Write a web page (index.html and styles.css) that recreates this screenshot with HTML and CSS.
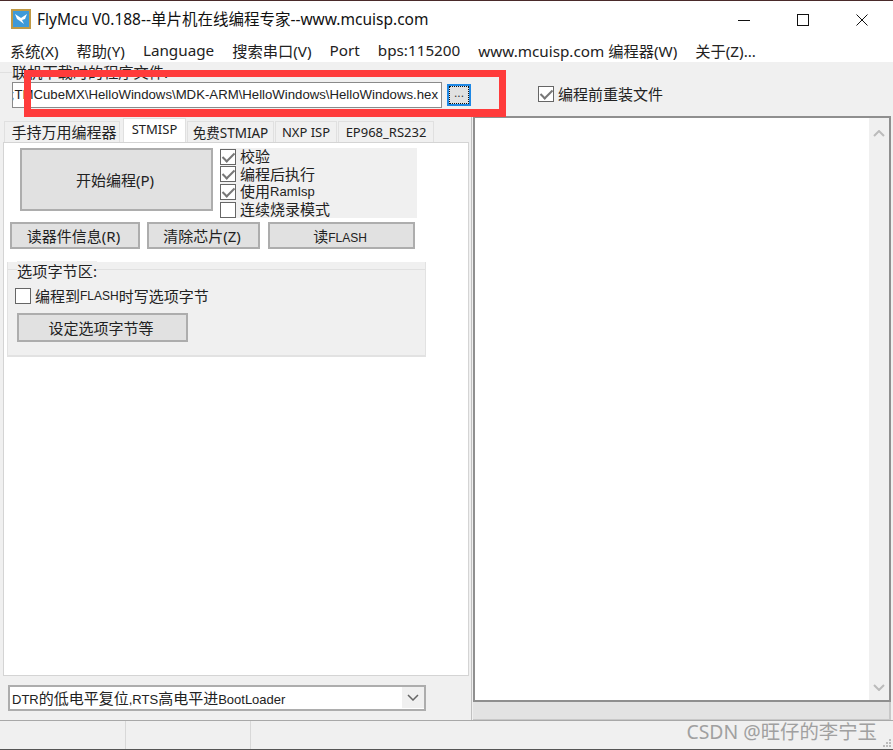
FILE: index.html
```html
<!doctype html>
<html>
    <head>
        <meta charset="utf-8">
        <title>FlyMcu</title>
        <link rel="stylesheet" href="styles.css">
    </head>
    <body>
    <div class="window">
        <div class="titlebar">
            <svg class="app-icon" width="20" height="20" viewBox="0 0 20 20">
                <rect x="1" y="1" width="18" height="18" fill="#3f9ad8" stroke="#c09a45" stroke-width="2"/>
                <path d="M4 5 L10 9 L16 5 L14 10 L11 11 L13 15 L9 12 L6 10 Z" fill="#fff"/>
            </svg>
            <span class="title-text">FlyMcu V0.188--单片机在线编程专家--www.mcuisp.com</span>
            <div class="win-buttons">
                <svg width="12" height="12" viewBox="0 0 12 12"><path d="M0 6.5H12" stroke="#111" fill="none"/></svg>
                <svg width="12" height="12" viewBox="0 0 12 12"><rect x="0.5" y="0.5" width="11" height="11" stroke="#111" fill="none"/></svg>
                <svg width="12" height="12" viewBox="0 0 12 12"><path d="M0.5 0.5L11.5 11.5M11.5 0.5L0.5 11.5" stroke="#111" fill="none"/></svg>
            </div>
        </div>
        <div class="menubar">
            <span>系统(X)</span>
            <span>帮助(Y)</span>
            <span>Language</span>
            <span>搜索串口(V)</span>
            <span>Port</span>
            <span>bps:115200</span>
            <span>www.mcuisp.com 编程器(W)</span>
            <span>关于(Z)...</span>
        </div>
        <div class="filebar">
            <div class="file-label"><span>联机下载时的程序文件:</span></div>
            <div class="file-row">
                <div class="file-input"><span>;TMCubeMX\HelloWindows\MDK-ARM\HelloWindows\HelloWindows.hex</span></div>
                <button class="browse-button"><span>...</span></button>
                <label class="check check-reload"><i class="box on"></i>编程前重装文件</label>
            </div>
        </div>
        <div class="red-mark"></div>
        <div class="main">
            <div class="left">
                <div class="tabs">
                    <span class="tab tab-first">手持万用编程器</span>
                    <span class="tab tab-active">STMISP</span>
                    <span class="tab tab-free">免费STMIAP</span>
                    <span class="tab tab-nxp">NXP ISP</span>
                    <span class="tab tab-ep">EP968_RS232</span>
                </div>
                <div class="tab-panel">
                    <div class="start-row">
                        <button class="btn start-button">开始编程(P)</button>
                        <div class="checks">
                            <label class="check"><i class="box on"></i>校验</label>
                            <label class="check"><i class="box on"></i>编程后执行</label>
                            <label class="check"><i class="box on"></i>使用<span class="latin">RamIsp</span></label>
                            <label class="check"><i class="box"></i>连续烧录模式</label>
                        </div>
                    </div>
                    <div class="button-row">
                        <button class="btn btn-read">读器件信息(R)</button>
                        <button class="btn btn-clear">清除芯片(Z)</button>
                        <button class="btn btn-flash">读<span class="latin-small">FLASH</span></button>
                    </div>
                    <div class="option-group">
                        <div class="legend"><span>选项字节区:</span></div>
                        <label class="check check-option"><i class="box"></i>编程到<span class="latin-small">FLASH</span>时写选项字节</label>
                        <button class="btn btn-option">设定选项字节等</button>
                    </div>
                </div>
                <div class="combo">
                    <span class="combo-text"><span class="latin">DTR</span>的低电平复位<span class="latin">,RTS</span>高电平进<span class="latin">BootLoader</span></span>
                    <span class="combo-arrow">
                        <svg width="12" height="7" viewBox="0 0 12 7"><path d="M1 1L6 6L11 1" stroke="#666" stroke-width="1.5" fill="none"/></svg>
                    </span>
                </div>
            </div>
            <div class="right">
                <div class="log">
                    <div class="log-scroll">
                        <svg width="12" height="7" viewBox="0 0 12 7"><path d="M1 6L6 1L11 6" stroke="#bbb" stroke-width="2" fill="none"/></svg>
                        <svg width="12" height="7" viewBox="0 0 12 7"><path d="M1 1L6 6L11 1" stroke="#bbb" stroke-width="2" fill="none"/></svg>
                    </div>
                </div>
                <div class="log-foot"></div>
            </div>
        </div>
        <div class="statusbar">
            <div class="status-cell status-a"></div>
            <div class="status-cell status-b"></div>
            <div class="status-last">
                <span class="watermark">CSDN @旺仔的李宁玉</span>
                <svg class="grip" width="10" height="10" viewBox="0 0 10 10">
                    <path d="M7 1h2v2H7zM4 4h2v2H4zM7 4h2v2H7zM1 7h2v2H1zM4 7h2v2H4zM7 7h2v2H7z" fill="#bbb"/>
                </svg>
            </div>
        </div>
    </div>
    </body>
</html>
```

FILE: styles.css
```css
* {
    box-sizing: border-box;
}
body {
    margin: 0;
    background: #fff;
    overflow: hidden;
}
.window {
    position: relative;
    display: flex;
    flex-direction: column;
    width: 893px;
    height: 750px;
    background: #f0f0f0;
    border-top: 1px solid #4a2a2a;
    border-bottom: 1px solid #555;
    font-family: "Noto Sans", "Noto Sans CJK SC", sans-serif;
    color: #222;
    font-size: 15px;
}
.latin {
    font-family: "Liberation Sans", "Noto Sans CJK SC", sans-serif;
    font-size: 13px;
}
.latin-small {
    font-family: "Liberation Sans", sans-serif;
    font-size: 12px;
}
.titlebar {
    display: flex;
    align-items: center;
    height: 37px;
    padding-left: 11px;
    background: #fff;
}
.app-icon {
    margin-top: -2px;
}
.title-text {
    margin-left: 6px;
    margin-top: -3px;
    font-size: 15.5px;
    color: #111;
}
.win-buttons {
    display: flex;
    gap: 47px;
    margin-left: auto;
    margin-right: 25px;
}
.menubar {
    display: flex;
    align-items: center;
    height: 24px;
    padding-left: 10px;
    background: #fff;
    font-size: 15.25px;
    white-space: nowrap;
}
.menubar span {
    margin-right: 18px;
}
.filebar {
    height: 56px;
    padding-left: 12px;
    background: linear-gradient(#e0e0e0, #e0e0e0) no-repeat 0 10px / 470px 1px;
}
.file-label {
    height: 20px;
    line-height: 20px;
    font-size: 15.2px;
}
.file-label span {
    background: #f0f0f0;
}
.file-row {
    display: flex;
    align-items: center;
    height: 26px;
}
.file-input {
    display: flex;
    justify-content: flex-end;
    align-items: center;
    width: 430px;
    height: 26px;
    padding-right: 3px;
    padding-bottom: 2px;
    overflow: hidden;
    background: #fff;
    border: 1px solid #8a8a8a;
    white-space: nowrap;
    font-family: "Liberation Sans", sans-serif;
    font-size: 13.2px;
}
.browse-button {
    width: 24px;
    height: 22px;
    margin-left: 5px;
    padding: 0;
    background: #e1e1e1;
    border: 2px solid #1e88e5;
    font-size: 12px;
}
.browse-button span {
    display: block;
    height: 100%;
    border: 1px dotted #111;
    line-height: 12px;
    color: #333;
}
.check {
    display: flex;
    align-items: center;
    height: 17.6px;
    line-height: 17px;
    font-size: 15px;
    white-space: nowrap;
}
.box {
    position: relative;
    flex: none;
    width: 16px;
    height: 16px;
    margin-right: 4px;
    background: #fff;
    border: 1px solid #666;
}
.box.on::after {
    content: "";
    position: absolute;
    left: 4px;
    top: 0;
    width: 5px;
    height: 10px;
    border: solid #777;
    border-width: 0 2px 2px 0;
    transform: rotate(45deg);
}
.check-reload {
    margin-left: 67px;
    margin-top: -2px;
}
.red-mark {
    position: absolute;
    left: 24px;
    top: 69px;
    width: 482px;
    height: 47px;
    border: 7px solid #ff3b3b;
    border-bottom-width: 8px;
}
.main {
    display: flex;
    flex: 1;
    min-height: 0;
}
.left {
    display: flex;
    flex-direction: column;
    width: 469px;
    padding-left: 3px;
}
.tabs {
    display: flex;
    align-items: flex-end;
    flex: none;
    height: 24px;
    padding-left: 1px;
}
.tab {
    display: flex;
    justify-content: center;
    align-items: center;
    height: 21px;
    margin-right: 1px;
    padding-bottom: 1px;
    background: #f0f0f0;
    border: 1px solid #e0e0e0;
    border-bottom: none;
    font-size: 13px;
    white-space: nowrap;
}
.tab-first {
    width: 116px;
    margin-right: 3px;
    padding-left: 4px;
    font-size: 15px;
}
.tab-active {
    width: 63px;
    height: 24px;
    padding-bottom: 4px;
    background: #fff;
}
.tab-free {
    width: 87px;
    font-size: 13.5px;
}
.tab-nxp {
    width: 62px;
}
.tab-ep {
    width: 96px;
}
.tab-panel {
    display: flex;
    flex-direction: column;
    flex: 1;
    padding: 5px 0 0 4px;
    background: #fff;
    border: 1px solid #d4d4d4;
}
.start-row {
    display: flex;
    height: 71px;
    padding-left: 12px;
}
.btn {
    padding: 0 3px 0 0;
    background: #e1e1e1;
    border: 2px solid #adadad;
    font-family: inherit;
    font-size: 15px;
    color: #222;
}
.start-button {
    width: 193px;
    height: 63px;
}
.checks {
    width: 197px;
    height: 70px;
    margin-left: 7px;
    background: #f0f0f0;
}
.button-row {
    display: flex;
    margin-top: 3px;
    padding-left: 2px;
}
.btn-read {
    width: 130px;
    height: 27px;
}
.btn-clear {
    width: 113px;
    height: 27px;
    margin-left: 7px;
}
.btn-flash {
    width: 147px;
    height: 27px;
    margin-left: 8px;
}
.option-group {
    width: 419px;
    height: 95px;
    margin-top: 13px;
    margin-left: -1px;
    padding-left: 9px;
    background: #f0f0f0;
    border-bottom: 2px solid #e2e2e2;
    border-left: 1px solid #e2e2e2;
    border-right: 1px solid #e2e2e2;
}
.legend {
    height: 17px;
    margin-left: -9px;
    padding-left: 9px;
    line-height: 18px;
    font-size: 15.2px;
    background: linear-gradient(#e0e0e0, #e0e0e0) no-repeat 0 7px / 100% 1px;
}
.legend span {
    background: #f0f0f0;
}
.check-option {
    height: 18px;
    margin-top: 8px;
    margin-left: -2px;
}
.btn-option {
    display: block;
    width: 171px;
    height: 29px;
    margin-top: 8px;
}
.combo {
    display: flex;
    align-items: center;
    flex: none;
    width: 418px;
    height: 26px;
    margin: 9px 0 9px 5px;
    padding-bottom: 1px;
    background: #fff;
    border: 2px solid #adadad;
}
.combo-text {
    padding-left: 2px;
    white-space: nowrap;
}
.combo-arrow {
    display: flex;
    justify-content: center;
    align-items: center;
    width: 22px;
    height: 100%;
    margin-left: auto;
    background: #f0f0f0;
}
.right {
    display: flex;
    flex-direction: column;
    width: 420px;
    margin-left: 2px;
    margin-top: -2px;
    padding-left: 1px;
    border-left: 1px solid #c0c0c0;
}
.log {
    flex: 1;
    display: flex;
    justify-content: flex-end;
    background: #fff;
    border: 2px solid #8f8f8f;
}
.log-scroll {
    display: flex;
    flex-direction: column;
    justify-content: space-between;
    align-items: center;
    width: 20px;
    padding: 12px 0 9px;
    background: #f0f0f0;
}
.log-foot {
    height: 18px;
    background: #e3e3e3;
    border-right: 2px solid #c8c8c8;
    border-bottom: 1px solid #c8c8c8;
}
.statusbar {
    display: flex;
    flex: none;
    height: 29px;
    border-top: 1px solid #a8a8a8;
}
.status-cell {
    border-right: 1px solid #d8d8d8;
}
.status-a {
    width: 126px;
}
.status-b {
    width: 125px;
}
.status-last {
    position: relative;
    flex: 1;
}
.watermark {
    position: absolute;
    right: 16px;
    top: 0;
    color: #a0a0a0;
    font-size: 19.4px;
    line-height: 22px;
    white-space: nowrap;
}
.grip {
    position: absolute;
    right: 1px;
    bottom: 1px;
}
```
